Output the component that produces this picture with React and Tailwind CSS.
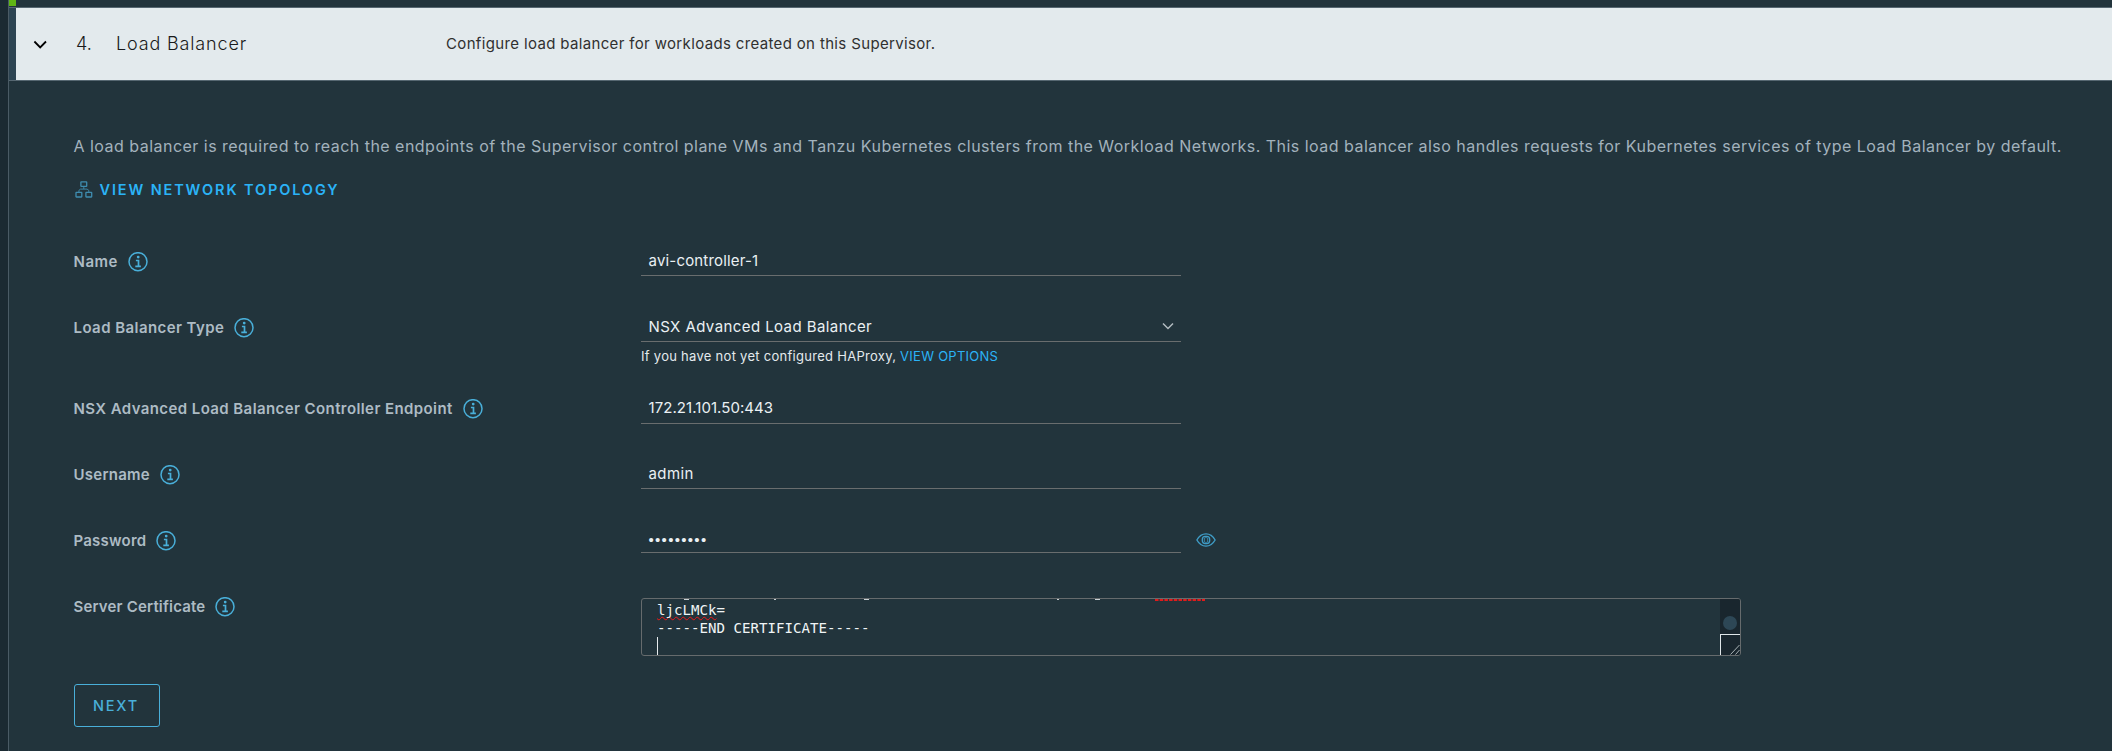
function InfoIcon() {
  return (
    <svg className="h-5 w-5 shrink-0 text-[#49afd9]" viewBox="0 0 20 20" fill="none" stroke="currentColor">
      <circle cx="10" cy="9.7" r="9" strokeWidth="1.5" />
      <circle cx="10.2" cy="5.1" r="1.4" fill="currentColor" stroke="none" />
      <path d="M7.9 8.5h2.6v5.6M7.3 14.3h5.6" strokeWidth="1.7" />
    </svg>
  );
}

function TopologyIcon() {
  return (
    <svg className="h-[18px] w-[18px] shrink-0 text-[#3f8db0]" viewBox="0 0 18 18" fill="none" stroke="currentColor">
      <rect x="5.9" y=".9" width="5.8" height="4.4" rx=".4" strokeWidth="1.3" />
      <rect x="1" y="11.4" width="5.8" height="4.6" rx=".4" strokeWidth="1.3" />
      <rect x="10.9" y="11.4" width="5.8" height="4.6" rx=".4" strokeWidth="1.3" />
      <path d="M8.8 5.4V8M3.9 11.2V9.4l1.6-1.3h6.6l1.7 1.3v1.8" strokeWidth=".9" />
    </svg>
  );
}

function EyeIcon() {
  return (
    <svg className="h-[14px] w-5 shrink-0 text-[#3f9cc6]" viewBox="0 0 20 14" fill="none" stroke="currentColor">
      <path d="M.9 7C3 3.2 6.2.9 10 .9S17 3.2 19.1 7C17 10.8 13.8 13.1 10 13.1S3 10.8.9 7Z" strokeWidth="1.4" />
      <rect x="6.3" y="3.4" width="7.4" height="7.2" rx="3" strokeWidth="1.3" />
      <rect x="8.3" y="4.6" width="3.4" height="4.8" rx="1.2" strokeWidth=".8" />
    </svg>
  );
}

function Row({ label, tracking, height, children }) {
  return (
    <div className={"flex items-start " + height}>
      <div className="flex h-5 w-[567.5px] shrink-0 items-center gap-[10px]">
        <span className={"text-[15px] leading-5 font-semibold whitespace-nowrap text-[#adbbc4] " + tracking}>{label}</span>
        <InfoIcon />
      </div>
      {children}
    </div>
  );
}

function Field({ children, className }) {
  return (
    <div className={"flex w-[540px] items-start justify-between border-b border-[#696d6e] pr-[7px] pl-[7.5px] text-[15px] leading-[18px] whitespace-nowrap text-[#eaf0f3] " + className}>
      {children}
    </div>
  );
}

export default function App() {
  return (
    <div className="flex h-[751px] w-[2112px] overflow-hidden bg-[#1b2a32] font-['Inter',sans-serif]">
      <div className="w-2 shrink-0" />
      <main className="flex flex-1 flex-col border-l border-[#4a5b65] bg-[#22343c]">
        <div className="h-[7px]">
          <div className="h-[6px] w-[7px] bg-[#60b515]" />
        </div>
        <header className="flex h-[74px] items-stretch border-y border-[#566771]">
          <div className="w-[7px] bg-[#2d4452]" />
          <div className="flex flex-1 items-center bg-[#e3eaed] pl-[17px] text-[#1a1a1a]">
            <svg className="h-4 w-4" viewBox="0 0 16 16" fill="none" stroke="#000" strokeWidth="1.8">
              <path d="M1.4 5.5l5.8 5.9L13 5.5" />
            </svg>
            <span className="ml-[27px] w-10 text-[18px] leading-6 font-light">4.</span>
            <h1 className="w-[330px] text-[18px] leading-6 font-light tracking-[0.85px]">Load Balancer</h1>
            <p className="text-[15px] leading-6 tracking-[0.35px] text-[#303030]">Configure load balancer for workloads created on this Supervisor.</p>
          </div>
        </header>

        <section className="flex flex-col pt-[53px] pl-[64.5px]">
          <p className="h-6 text-[16px] leading-6 tracking-[0.475px] whitespace-nowrap text-[#a3b2bd]">
            A load balancer is required to reach the endpoints of the Supervisor control plane VMs and Tanzu Kubernetes clusters from the Workload Networks. This load balancer also handles requests for Kubernetes services of type Load Balancer by default.
          </p>
          <a className="mt-[22px] flex h-5 items-center gap-[6.5px] pl-[1.5px] text-[#2bb3f7]">
            <TopologyIcon />
            <span className="text-[14.5px] leading-5 font-semibold tracking-[1.87px]">VIEW NETWORK TOPOLOGY</span>
          </a>

          <div className="mt-[52px]">
            <Row label="Name" tracking="tracking-[0.5px]" height="h-[66px]">
              <Field className="h-6 tracking-[0.18px]">avi-controller-1</Field>
            </Row>
            <Row label="Load Balancer Type" tracking="tracking-[0.43px]" height="h-[81px]">
              <div>
                <Field className="h-6 tracking-[0.42px]">
                  NSX Advanced Load Balancer
                  <svg className="mt-[2px] h-3 w-3" viewBox="0 0 12 12" fill="none" stroke="#b3bcc1" strokeWidth="1.5">
                    <path d="M1 3.5l5 5 5-5" />
                  </svg>
                </Field>
                <p className="mt-1 text-[13px] leading-5 tracking-[0.28px] whitespace-nowrap text-[#e4eaed]">
                  If you have not yet configured HAProxy, <a className="tracking-[0.26px] text-[#2bb3f7]">VIEW OPTIONS</a>
                </p>
              </div>
            </Row>
            <Row label="NSX Advanced Load Balancer Controller Endpoint" tracking="tracking-[0.41px]" height="h-[66px]">
              <Field className="h-[25px] tracking-[0.06px]">172.21.101.50:443</Field>
            </Row>
            <Row label="Username" tracking="tracking-[0.25px]" height="h-[66px]">
              <Field className="h-6 tracking-[0.42px]">admin</Field>
            </Row>
            <Row label="Password" tracking="tracking-[0.22px]" height="h-[66px]">
              <Field className="h-[22px] font-['Liberation_Sans',sans-serif] tracking-[1.3px]">•••••••••</Field>
              <div className="mt-[2px] ml-[15px]">
                <EyeIcon />
              </div>
            </Row>
            <Row label="Server Certificate" tracking="tracking-[0.18px]" height="h-[87px]">
              <div className="relative mt-px flex h-[58px] w-[1100px] overflow-hidden rounded-[3px] border border-[#666b6d]">
                <svg className="absolute top-0 left-0 h-[2px] w-[600px]" viewBox="0 0 600 2">
                  <path d="M42 .5h5M132 .5h2M222 .5h5M415 .5h2M453 .5h5" stroke="#c9d1d5" />
                  <path d="M513 1h50" stroke="#e01b1b" strokeWidth="2" strokeDasharray="3.5 1.2" />
                </svg>
                <div className="flex-1 pt-[3px] pl-[15px] font-['DejaVu_Sans_Mono',monospace] text-[14.1px] leading-[17.6px] tracking-[0.02px] whitespace-pre text-[#f0f4f6]">
                  <div>
                    <span className="underline decoration-[#f01818] decoration-wavy decoration-[1.4px] underline-offset-[1px] [text-decoration-skip-ink:none]">ljcLMCk</span>=
                  </div>
                  <div>-----END CERTIFICATE-----</div>
                  <div className="h-[18px] w-px bg-[#e6ebee]" />
                </div>
                <div className="flex w-[20px] shrink-0 flex-col">
                  <div className="flex h-[35px] items-end justify-center bg-[#19262e] pb-[4px]">
                    <div className="h-[14px] w-[14px] rounded-full bg-[#2d4756]" />
                  </div>
                  <div className="flex flex-1 items-end justify-end border-t border-l border-[#dfe5e8] bg-[#19262e]">
                    <svg className="h-[11px] w-[11px]" viewBox="0 0 11 11" stroke="#a9b2b6" strokeWidth="1">
                      <path d="M1.5 10.5L10.5 1M6.5 10.5l4-4.5" />
                    </svg>
                  </div>
                </div>
              </div>
            </Row>
          </div>

          <button className="flex h-[43px] w-[86px] items-center justify-center rounded-[3px] border border-[#49afd9] pr-px text-[14.5px] leading-5 font-medium tracking-[1.75px] text-[#49afd9]">NEXT</button>
        </section>
      </main>
    </div>
  );
}
